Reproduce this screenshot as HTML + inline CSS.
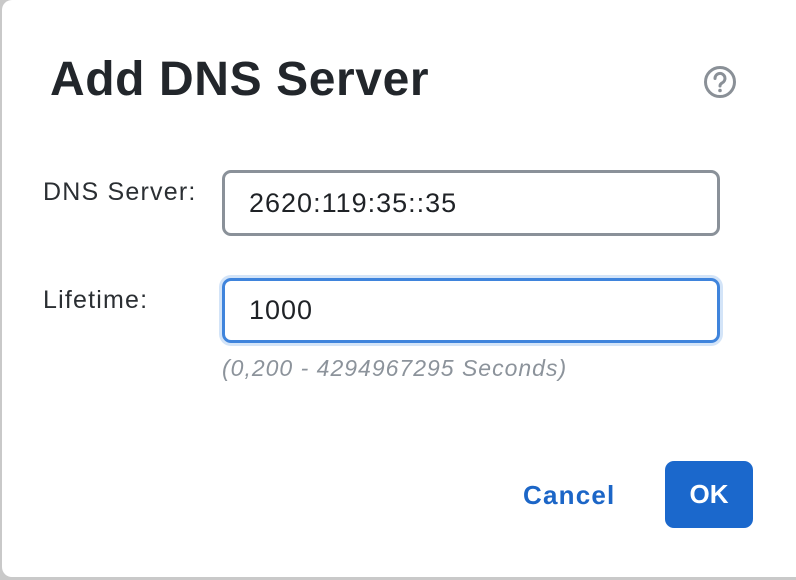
<!DOCTYPE html>
<html><head><style>
html,body{margin:0;padding:0;width:796px;height:580px;overflow:hidden;background:#c9c9c9;font-family:"Liberation Sans",Arial,sans-serif;}
.dlg{position:absolute;left:2px;top:0;width:806px;height:577px;background:#fff;border-radius:10px;}
.title{position:absolute;left:50px;top:52px;font-size:48px;font-weight:bold;color:#22262b;letter-spacing:0.6px;}
.help{position:absolute;left:703px;top:65px;}
.lbl{position:absolute;left:43px;font-size:25px;color:#2b2f33;letter-spacing:1.2px;}
.inp{position:absolute;left:222px;width:498px;box-sizing:border-box;border-radius:9px;font-size:27px;color:#1f2226;padding-left:24px;letter-spacing:1px;}
.i1{top:170px;height:66px;border:3px solid #8a9199;line-height:60px;}
.i2{top:278px;height:65px;border:3px solid #3f84dc;line-height:59px;box-shadow:0 0 0 3px #d3e4f8;}
.hint{position:absolute;left:222px;top:355px;font-size:23px;font-style:italic;color:#8c939b;letter-spacing:1px;}
.cancel{position:absolute;left:523px;top:480px;font-size:26px;font-weight:bold;color:#1c66c7;letter-spacing:1.2px;}
.ok{position:absolute;left:665px;top:461px;width:88px;height:67px;background:#1b68cc;border-radius:9px;color:#fff;font-size:26px;font-weight:bold;text-align:center;line-height:67px;}
</style></head><body>
<div class="dlg"></div>
<div class="title">Add DNS Server</div>
<svg class="help" width="34" height="34" viewBox="0 0 34 34"><circle cx="17" cy="17" r="14.5" fill="none" stroke="#8a9097" stroke-width="3"/><path d="M12 13.5a5 5 0 1 1 7 4.5c-1.5.8-2 1.6-2 3" fill="none" stroke="#8a9097" stroke-width="3" stroke-linecap="round"/><circle cx="17" cy="25.5" r="1.8" fill="#8a9097"/></svg>
<div class="lbl" style="top:178px">DNS Server:</div>
<div class="inp i1">2620:119:35::35</div>
<div class="lbl" style="top:286px">Lifetime:</div>
<div class="inp i2">1000</div>
<div class="hint">(0,200 - 4294967295 Seconds)</div>
<div class="cancel">Cancel</div>
<div class="ok">OK</div>
</body></html>
